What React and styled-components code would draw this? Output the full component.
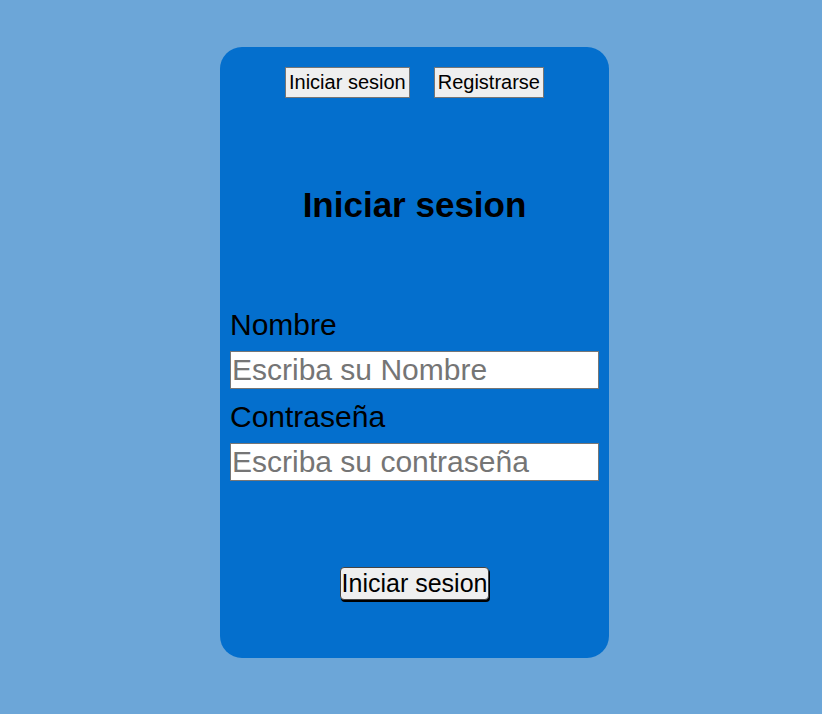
import React from 'react'
import styled, {createGlobalStyle} from 'styled-components'

const Global = createGlobalStyle`
  html, body {
    margin: 0;
    background: #6ca6d8;
    font-family: "Liberation Sans", Arial, sans-serif;
  }
`

const Page = styled.div`
  display: flex;
  justify-content: center;
  padding: 47px 0 0 7px;
  min-height: 714px;
  box-sizing: border-box;
`

const Card = styled.div`
  width: 389px;
  height: 611px;
  box-sizing: border-box;
  background: #046fcd;
  border-radius: 22px;
  padding: 20px 10px 0;
  display: flex;
  flex-direction: column;
`

const Tabs = styled.div`
  display: flex;
  justify-content: center;
  gap: 24px;
`

const TabBtn = styled.button`
  font-family: "Liberation Sans", Arial, sans-serif;
  font-size: 20px;
  color: #000;
  background: #efefef;
  border: 1px solid #767676;
  border-radius: 0;
  height: 31px;
  padding: 0 3px;
`

const Title = styled.h1`
  margin: 87px 0 0;
  text-align: center;
  font-size: 35px;
  font-weight: bold;
  line-height: 40px;
`

const Form = styled.form`
  margin-top: 83px;
  display: flex;
  flex-direction: column;
`

const Label = styled.label`
  font-size: 30px;
  line-height: 34px;
  color: #000;
  margin-bottom: 9px;
`

const Input = styled.input`
  font-family: "Liberation Sans", Arial, sans-serif;
  font-size: 30px;
  height: 38px;
  box-sizing: border-box;
  border: 1px solid #767676;
  padding: 0 1px;
  margin-bottom: 11px;
  &::placeholder {
    color: #757575;
  }
`

const Submit = styled.button`
  align-self: center;
  margin-top: 75px;
  font-family: "Liberation Sans", Arial, sans-serif;
  font-size: 25px;
  color: #000;
  background: #efefef;
  border: 1px solid #444;
  border-radius: 4px;
  box-shadow: 1px 2px 0 #000;
  height: 33px;
  padding: 0 1px;
`

export default function App() {
  return (
    <>
      <Global />
      <Page>
        <Card>
          <Tabs>
            <TabBtn>Iniciar sesion</TabBtn>
            <TabBtn>Registrarse</TabBtn>
          </Tabs>
          <Title>Iniciar sesion</Title>
          <Form onSubmit={e => e.preventDefault()}>
            <Label>Nombre</Label>
            <Input placeholder='Escriba su Nombre' />
            <Label>Contraseña</Label>
            <Input type='password' placeholder='Escriba su contraseña' />
            <Submit type='submit'>Iniciar sesion</Submit>
          </Form>
        </Card>
      </Page>
    </>
  )
}
